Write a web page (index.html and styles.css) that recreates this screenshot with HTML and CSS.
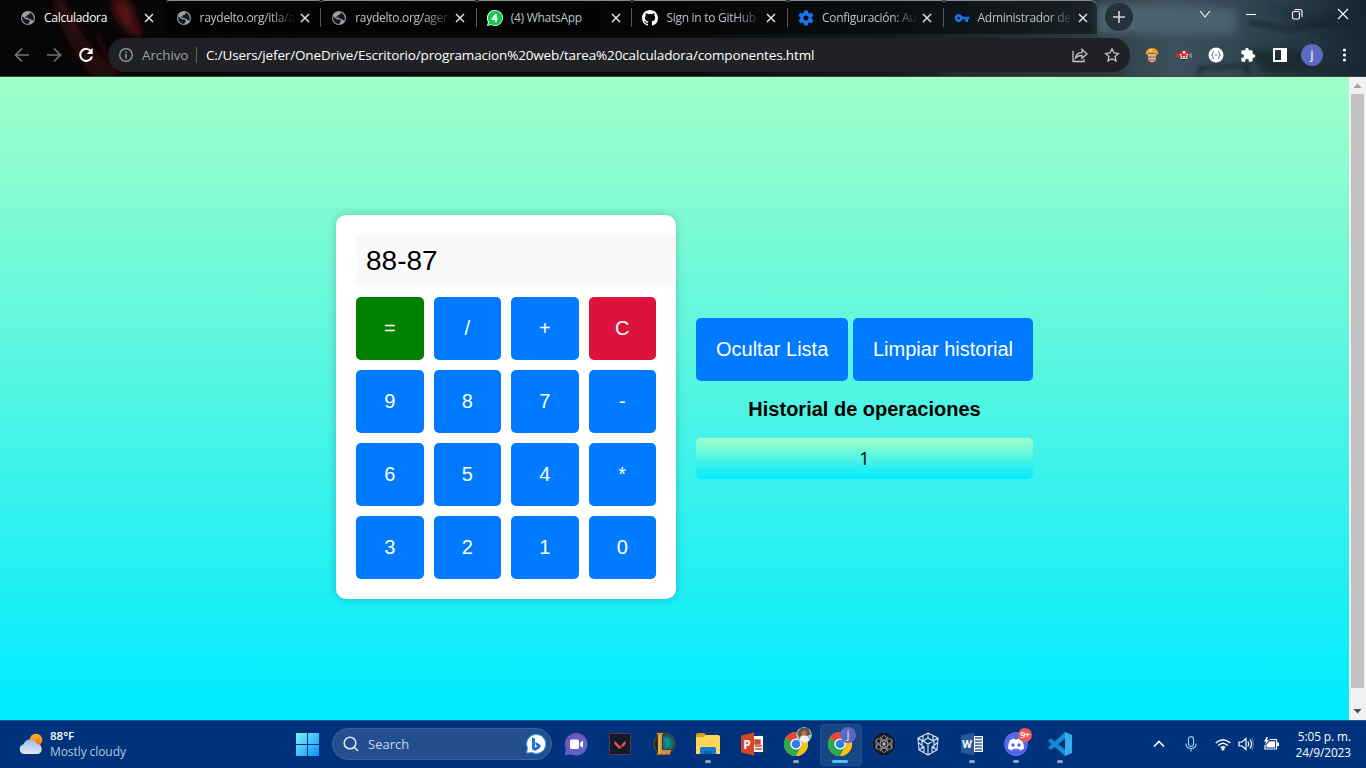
FILE: index.html
```html
<!DOCTYPE html>
<html lang="es">
<head>
<meta charset="utf-8">
<title>Calculadora</title>
<link rel="stylesheet" href="styles.css">
</head>
<body>
<svg class="defs" width="0" height="0">
  <defs>
    <symbol id="globe" viewBox="0 0 16 16"><circle cx="8" cy="8" r="7" fill="#9aa0a6"/><path d="M2.200 6.300L5.400 9l1.200.4h2.200l.9.900v1.500l-1.200 1.200v1.300C4.300 14.300 1.500 10.600 2.200 6.300zM9.600 2.400v1.300L8.300 5H6.900v1.500H5.300v1.300h2.800l1.100 1.100h1.700l.6 1.400h1.500l.5.700C14.500 7.500 13.200 3.600 9.600 2.400z" fill="#151618"/></symbol>
    <symbol id="close" viewBox="0 0 10 10"><path d="M1 1l8 8M9 1L1 9" stroke="currentColor" stroke-width="1.500" fill="none"/></symbol>
    <symbol id="chrome" viewBox="0 0 24 24"><circle cx="12" cy="12" r="12" fill="#fbc116"/><path d="M12 12L1.600 6A12 12 0 0 1 22.400 6z" fill="#ea4335"/><path d="M12 12L1.600 6A12 12 0 0 0 12 24l5.200-9z" fill="#2da94f"/><path d="M12 6.500h10.700A12 12 0 0 1 12 24l4.800-9z" fill="#fbc116"/><circle cx="12" cy="12" r="5.600" fill="#fff"/><circle cx="12" cy="12" r="4.300" fill="#2f7de9"/></symbol>
  </defs>
</svg>

<header class="browser">
  <svg class="theme" width="1366" height="77" viewBox="0 0 1366 77" preserveAspectRatio="none">
    <defs>
      <linearGradient id="sky" x1="0" x2="1"><stop offset="0" stop-color="#050505"/><stop offset=".5" stop-color="#090a0b"/><stop offset=".66" stop-color="#141c21"/><stop offset=".8" stop-color="#2c3b45"/><stop offset=".86" stop-color="#3c515d"/><stop offset=".93" stop-color="#2d414d"/><stop offset="1" stop-color="#182630"/></linearGradient>
      <filter id="soft" x="-50%" y="-50%" width="200%" height="200%"><feGaussianBlur stdDeviation="5"/></filter>
      <filter id="fine" x="-50%" y="-50%" width="200%" height="200%"><feGaussianBlur stdDeviation="2"/></filter>
    </defs>
    <rect width="1366" height="77" fill="url(#sky)"/>
    <path d="M52 0q10 40 40 77h30Q80 40 66 0z" fill="#25080a" filter="url(#soft)"/>
    <path d="M112 0q2 26 30 40l-8-24-6-16z" fill="#5c1216" filter="url(#soft)"/>
    <path d="M58 0q12 20 20 34M97 34q8 20 18 40M116 0q6 20 24 33" stroke="#4e1216" stroke-width="2" fill="none" filter="url(#fine)"/>
    <g filter="url(#soft)">
      <path d="M1096 34V4h70l70 6v24z" fill="#4c636e"/>
      <path d="M1245 50h60l50 25h-90z" fill="#1c2a32"/>
      <path d="M1265 5l50 16 50-12v22l-50-3z" fill="#182730"/>
      <path d="M960 60h160v17H940z" fill="#273037"/>
    </g>
    <path d="M1250 22l40 8 76-20M1200 77v-8l48-2v10" stroke="#16242c" stroke-width="3" fill="none" filter="url(#fine)"/>
  </svg>

  <div class="strip">
    <div class="tab active"><svg class="fav"><use href="#globe"/></svg><span class="name">Calculadora</span><svg class="x"><use href="#close"/></svg></div>
    <div class="tab nosep"><svg class="fav"><use href="#globe"/></svg><span class="name fade">raydelto.org/itla/a</span><svg class="x"><use href="#close"/></svg></div>
    <div class="tab"><svg class="fav"><use href="#globe"/></svg><span class="name fade">raydelto.org/ager</span><svg class="x"><use href="#close"/></svg></div>
    <div class="tab"><svg class="fav" viewBox="0 0 16 16"><path d="M8 0a8 8 0 1 1-3.600 15.100L0 16l1-4A8 8 0 0 1 8 0z" fill="#fff"/><path d="M8 .8a7.200 7.200 0 1 1-3.500 13.400l-3.300.8.8-3.200A7.200 7.200 0 0 1 8 .8z" fill="#14c94c"/><path d="M8.800 4L5.500 9.300h5M9 4v8" stroke="#fff" stroke-width="1.600" fill="none"/></svg><span class="name">(4) WhatsApp</span><svg class="x"><use href="#close"/></svg></div>
    <div class="tab"><svg class="fav" viewBox="0 0 16 16"><path fill="#fff" d="M8 0C3.580 0 0 3.580 0 8c0 3.540 2.290 6.530 5.470 7.590.4.070.55-.17.55-.38 0-.19-.01-.82-.01-1.490-2.010.37-2.530-.49-2.690-.94-.09-.23-.48-.94-.82-1.130-.28-.15-.68-.52-.01-.53.63-.01 1.080.58 1.230.82.72 1.210 1.870.87 2.330.66.07-.52.28-.87.51-1.070-1.780-.2-3.640-.89-3.640-3.950 0-.87.31-1.590.82-2.150-.08-.2-.36-1.020.08-2.120 0 0 .67-.21 2.200.82a7.600 7.600 0 0 1 4 0c1.530-1.040 2.200-.82 2.200-.82.44 1.100.16 1.920.08 2.120.51.56.82 1.270.82 2.150 0 3.070-1.870 3.750-3.650 3.950.29.25.54.73.54 1.480 0 1.070-.01 1.930-.01 2.200 0 .21.15.46.55.38A8 8 0 0 0 16 8c0-4.420-3.580-8-8-8z"/></svg><span class="name fade">Sign in to GitHub</span><svg class="x"><use href="#close"/></svg></div>
    <div class="tab"><svg class="fav" viewBox="1.500 1.500 21 21"><path fill="#1a73e8" d="M19.400 13c.1-.6.100-1.300 0-2l2.100-1.600c.2-.2.300-.5.100-.7l-2-3.400c-.1-.2-.4-.3-.6-.2l-2.500 1a7 7 0 0 0-1.700-1l-.4-2.600c0-.3-.2-.5-.5-.5h-4c-.3 0-.5.200-.5.500L9 5.100a7 7 0 0 0-1.700 1l-2.500-1c-.2-.1-.5 0-.6.200l-2 3.400c-.1.200-.1.500.1.700L4.500 11v2l-2.200 1.600c-.2.200-.2.500-.1.700l2 3.400c.1.200.4.300.6.200l2.500-1a7 7 0 0 0 1.700 1l.4 2.600c0 .3.200.5.500.5h4c.3 0 .5-.2.500-.5l.4-2.600a7 7 0 0 0 1.700-1l2.500 1c.2.1.5 0 .6-.2l2-3.400c.1-.2.100-.5-.1-.7zM12 15.300a3.300 3.300 0 1 1 0-6.600 3.300 3.300 0 0 1 0 6.600z"/></svg><span class="name fade">Configuración: Au</span><svg class="x"><use href="#close"/></svg></div>
    <div class="tab last"><svg class="fav" viewBox="0 0 24 24"><path fill="#1a73e8" d="M12.700 10a6 6 0 1 0 0 4H17v4h4v-4h2v-4zM7 14a2 2 0 1 1 0-4 2 2 0 0 1 0 4z"/></svg><span class="name fade">Administrador de</span><svg class="x"><use href="#close"/></svg></div>
    <div class="plus"><svg width="12" height="12"><path d="M6 0v12M0 6h12" stroke="#d5d8da" stroke-width="1.600"/></svg></div>
    <div class="window">
      <svg viewBox="0 0 12 12"><path d="M1 3l5 6 5-6"/></svg>
      <svg viewBox="0 0 12 12"><path d="M1 6.500h10"/></svg>
      <svg viewBox="0 0 12 12"><rect x="1.500" y="3.500" width="7" height="7.500" rx="1.500"/><path d="M3.500 1.500H9a2 2 0 0 1 2 2V9"/></svg>
      <svg viewBox="0 0 12 12"><path d="M1 1l10 10M11 1L1 11"/></svg>
    </div>
  </div>

  <div class="toolbar">
    <svg class="nav dim" viewBox="0 0 16 16"><path d="M15 8H2M8 1.500L1.500 8 8 14.500"/></svg>
    <svg class="nav dim" viewBox="0 0 16 16"><path d="M1 8h13M8 1.500L14.500 8 8 14.500"/></svg>
    <svg class="nav" viewBox="0 0 16 16"><path d="M13.200 4.500A6 6 0 1 0 14 9.500" stroke-width="2"/><path d="M14.700 1v6h-6z" fill="#fff" stroke="none"/></svg>
    <div class="omnibox">
      <svg class="info" viewBox="0 0 14 14"><circle cx="7" cy="7" r="6.300" fill="none" stroke="#9aa0a6" stroke-width="1.300"/><path d="M7 6v4.500M7 3.500v1.500" stroke="#9aa0a6" stroke-width="1.500"/></svg>
      <span class="scheme">Archivo</span><i class="bar"></i>
      <span class="url">C:/Users/jefer/OneDrive/Escritorio/programacion%20web/tarea%20calculadora/componentes.html</span>
      <svg class="share" viewBox="0 0 16 16"><path d="M1 4v10.500h11V12M3.500 11c.5-3.500 3-5.300 6.500-5.300V2.500L15 7l-5 4.300V8.500C7 8.500 5 9.200 3.500 11z"/></svg>
      <svg class="star" viewBox="0 0 16 16"><path d="M8 1.800l1.900 4.100 4.500.5-3.300 3.100.9 4.500-4-2.300L4 14l.9-4.500L1.600 6.400l4.500-.5z"/></svg>
    </div>
    <div class="ext">
      <svg viewBox="0 0 16 16"><path d="M3.500 7h9l-1 7L8 15.500 4.500 14z" fill="#e7b184"/><path d="M1.500 7.500Q2 1 8 1t6.500 6.500Q8 5 1.500 7.500z" fill="#f5a21f"/><path d="M5 2.500h3v2H5z" fill="#ffd87b"/><path d="M4.500 9h3v2h-3zm4 0h3v2h-3z" fill="#6f91a8"/><path d="M5 13h6" stroke="#d76c36" stroke-width="1.500"/></svg>
      <svg viewBox="0 0 16 16"><path d="M0 6l3 1v3L0 11z" fill="#d22a2b"/><path d="M16 6l-3 1v3l3 1z" fill="#78858a"/><path d="M3 9q0-5.500 5-5.500T13 9z" fill="#df2530"/><path d="M6.800 4.200h2.400v2.400H6.800zM4 7h1.500v1.500H4zm6.500 0H12v1.500h-1.500z" fill="#fff"/><path d="M4.500 9h7v3.500h-7z" fill="#ecc7ab"/><path d="M6 9.500h1v1.500H6zm3 0h1v1.500H9zM5 12h6v1H5z" fill="#3a2020"/></svg>
      <svg viewBox="0 0 16 16"><circle cx="8" cy="8" r="7.500" fill="#fff"/><path d="M6 4.500q-1.500 0-1.300 1.800T3.500 8q1.400 0 1.200 1.700T6 11.500M10 4.500q1.500 0 1.300 1.800T12.500 8q-1.400 0-1.200 1.700T10 11.500M6.500 8h3" stroke="#777" fill="none"/></svg>
      <svg viewBox="0 0 24 24"><path fill="#fff" d="M20.500 11H19V7a2 2 0 0 0-2-2h-4V3.500a2.500 2.500 0 0 0-5 0V5H4a2 2 0 0 0-2 2v3.800h1.500a2.700 2.700 0 0 1 0 5.400H2V20c0 1.100.9 2 2 2h3.800v-1.500a2.700 2.700 0 0 1 5.400 0V22H17a2 2 0 0 0 2-2v-4h1.500a2.500 2.500 0 0 0 0-5z"/></svg>
      <svg viewBox="0 0 16 16"><path d="M1 1h14v14H1zm2 2v10h6V3z" fill="#fff" fill-rule="evenodd"/></svg>
      <span class="avatar">j</span>
      <svg viewBox="0 0 16 16"><circle cx="8.500" cy="3" r="1.600" fill="#fff"/><circle cx="8.500" cy="8" r="1.600" fill="#fff"/><circle cx="8.500" cy="13" r="1.600" fill="#fff"/></svg>
    </div>
  </div>
</header>

<div class="viewport">
  <main class="page">
    <section class="calc">
      <div class="display">88-87</div>
      <div class="keys">
        <button class="btn equal">=</button><button class="btn">/</button><button class="btn">+</button><button class="btn clear">C</button>
        <button class="btn">9</button><button class="btn">8</button><button class="btn">7</button><button class="btn">-</button>
        <button class="btn">6</button><button class="btn">5</button><button class="btn">4</button><button class="btn">*</button>
        <button class="btn">3</button><button class="btn">2</button><button class="btn">1</button><button class="btn">0</button>
      </div>
    </section>
    <section class="history">
      <div class="actions"><button class="btn">Ocultar Lista</button><button class="btn">Limpiar historial</button></div>
      <h2>Historial de operaciones</h2>
      <div class="entry">1</div>
    </section>
  </main>
  <div class="scroll">
    <svg width="17" height="17"><path d="M4.500 11h8l-4-4.500z" fill="#a3a3a3"/></svg>
    <div class="thumb"></div>
    <svg width="17" height="17"><path d="M4.500 6h8l-4 4.500z" fill="#505050"/></svg>
  </div>
</div>

<footer class="taskbar">
  <div class="weather">
    <svg width="26" height="22" viewBox="0 0 26 22"><defs><linearGradient id="cl" x2="0" y2="1"><stop stop-color="#9db9ea"/><stop offset="1" stop-color="#e4e9f8"/></linearGradient><linearGradient id="sun" x2="0" y2="1"><stop stop-color="#fdb62a"/><stop offset="1" stop-color="#ed6810"/></linearGradient></defs><circle cx="18" cy="7" r="6.300" fill="url(#sun)"/><path d="M6 21a5 5 0 0 1-.5-9.800A7.200 7.200 0 0 1 19 11a5.100 5.100 0 0 1 1 10z" fill="url(#cl)"/></svg>
    <div><b>88°F</b><span>Mostly cloudy</span></div>
  </div>
  <svg class="start" viewBox="0 0 23 23"><defs><linearGradient id="win" x2="1" y2="1"><stop stop-color="#83f0ff"/><stop offset="1" stop-color="#0592f8"/></linearGradient></defs><path d="M0 0h11v11H0zm12 0h11v11H12zM0 12h11v11H0zm12 0h11v11H12z" fill="url(#win)"/></svg>
  <div class="search">
    <svg width="16" height="16" viewBox="0 0 16 16"><circle cx="7" cy="7" r="5.800"/><path d="M11.200 11.200L15 15"/></svg>
    <span>Search</span>
    <svg class="bing" width="20" height="20" viewBox="0 0 20 20"><path d="M10 .5a9.500 9.500 0 1 1-4 18L.7 19l.8-5A9.500 9.500 0 0 1 10 .5z" fill="#fff" stroke="#2ba9ed"/><path d="M6 3.500l3 1v9l-3 2z" fill="#1877db"/><path d="M9 13.500l2.500-1.300-1.500-1L9 8l5 2.300q1.500 3-1 4.300L9 17l-3-2z" fill="#2d63dc"/></svg>
  </div>
  <div class="apps">
    <div><svg viewBox="0 0 24 24"><defs><linearGradient id="ch" x2="1" y2="1"><stop stop-color="#7754b8"/><stop offset="1" stop-color="#5967d0"/></linearGradient></defs><path d="M12 1a11.300 11.300 0 1 1-5 21.300L.5 23l1.300-6A11.300 11.300 0 0 1 12 1z" fill="url(#ch)"/><rect x="6" y="7.500" width="9" height="9.500" rx="1.500" fill="#fff"/><path d="M16 11l3-2.500v7.500l-3-2.500z" fill="#fff"/></svg></div>
    <div><svg viewBox="0 0 24 24"><path d="M1.500 1.500h21v21h-21z" fill="#111b25" stroke="#71304b"/><path d="M6.500 8.500v3.500l4 4.500h3.500zm11 0v3.500l-2 2.500h-3.500z" fill="#ff4655"/></svg></div>
    <div><svg viewBox="0 0 24 24"><circle cx="12.500" cy="12" r="10.500" fill="#152426" stroke="#715926"/><circle cx="13.500" cy="11.500" r="8.500" fill="#0c717b"/><path d="M12 6q6-1 7 6l-5 5" fill="#118e97"/><path d="M4 .5h8l-1.500 3v14h9.500l-2 5.500H4l1.500-3V4z" fill="#c79345" stroke="#493415"/><path d="M7.500 3v18" stroke="#e5bd64" stroke-width="1.500"/></svg></div>
    <div class="open"><svg viewBox="0 0 24 24"><path d="M0 3q0-2 2-2h6l3 3v4H0z" fill="#dc9c17"/><path d="M0 5h8l2-2h12q2 0 2 2v17H0z" fill="#ffd65a"/><path d="M4 22v-5q0-2 2-2h12q2 0 2 2v5z" fill="#147acb"/><path d="M8 19h8v3H8z" fill="#0860a8"/></svg></div>
    <div><svg viewBox="0 0 24 24"><path d="M13 4h10v16H13z" fill="#fff"/><path d="M15 8h5v4h-5zM15 14h7m-7 3h7" fill="#d24726" stroke="#d24726" stroke-width="1.500"/><path d="M1 3.500l13-3v23l-13-3z" fill="#d24726"/><text x="3.300" y="16.500" class="office">P</text></svg></div>
    <div class="open"><svg viewBox="0 0 24 24"><use href="#chrome"/></svg><svg class="photo" viewBox="0 0 16 16"><circle cx="8" cy="8" r="8" fill="#aebbb7"/><path d="M1 6l4-5 7 0 3 6-6 3-5 2z" fill="#5c5644"/><path d="M4 14q-1-6 4-6t5 6l-4 2z" fill="#ecf0eb"/><circle cx="8" cy="6" r="2.600" fill="#be7151"/></svg></div>
    <div class="open current"><svg viewBox="0 0 24 24"><use href="#chrome"/></svg><span class="photo profile">j</span></div>
    <div><svg viewBox="0 0 24 24"><circle cx="12" cy="12" r="11" fill="#171719"/><g fill="none" stroke="#92969a" stroke-width=".9"><ellipse cx="12" cy="12" rx="3.500" ry="8.500"/><ellipse cx="12" cy="12" rx="3.500" ry="8.500" transform="rotate(60 12 12)"/><ellipse cx="12" cy="12" rx="3.500" ry="8.500" transform="rotate(120 12 12)"/><path d="M4 7.500v9M20 7.500v9M8 4.500l8 15M16 4.500l-8 15"/></g><circle cx="12" cy="12" r="1.800" fill="#aaa"/></svg></div>
    <div><svg viewBox="0 0 24 24"><g fill="none" stroke="#dbe6f5" stroke-width="1.100"><path d="M12 1l10 5-1 12-9 5-9-5L2 6zM2 6l10 6 10-6M12 12v11M7 3.500v5.500l5-3 5 3V3.500M3 11l5 4v6M21 11l-5 4v6M6 8v8m12-8v8M12 1v5M3 18l5-3m13 3l-5-3"/></g></svg></div>
    <div class="open"><svg viewBox="0 0 24 24"><path d="M13 4h10v16H13z" fill="#fff"/><path d="M15 6h7m-7 3h7m-7 3h7m-7 3h7m-7 3h7" stroke="#2b579a" stroke-width="1.300"/><path d="M1 3.500l13-3v23l-13-3z" fill="#2b579a"/><text x="2.200" y="16" class="office word">W</text></svg></div>
    <div class="open"><svg viewBox="0 0 24 24"><circle cx="12" cy="12" r="12" fill="#5865f2"/><path d="M6 7.500q3-1.500 4-1.500l.6 1h2.800l.6-1q1 0 4 1.500 2 4 2 8.500-2 1.700-4 2l-1-1.800H9L8 18q-2-.3-4-2 0-4.500 2-8.500zm3 3.200a1.600 1.800 0 1 0 .01 0zm6 0a1.600 1.800 0 1 0 .01 0z" fill="#fff" fill-rule="evenodd" transform="translate(0 .5)"/></svg><span class="badge">9+</span></div>
    <div class="open"><svg viewBox="0 0 24 24"><path d="M17 0l7 3v18l-7 3L0 9l2.500-2.500L18 18V6L2.500 18 0 15.500z" fill="#158bd3"/><path d="M17 0l7 3v18l-7 3z" fill="#36adee"/></svg></div>
  </div>
  <div class="tray">
    <svg viewBox="0 0 16 16"><path d="M3 10.500l5-5 5 5" stroke-width="1.700"/></svg>
    <svg viewBox="0 0 16 16"><rect x="5.500" y=".7" width="5" height="9.600" rx="2.500" stroke="#82cbf0"/><path d="M3 7.500q0 5 5 5t5-5M8 12.500v3" stroke="#82cbf0"/></svg>
    <svg viewBox="0 0 16 16"><path d="M.7 7Q8 .3 15.300 7M3.200 9.500q4.800-4.700 9.600 0M5.700 11.800q2.300-2.200 4.600 0" stroke-width="1.400"/><circle cx="8" cy="13" r="1" fill="#fff"/></svg>
    <svg viewBox="0 0 16 16"><path d="M1 6h3l4-3.500v11L4 10H1zM10 5.500q1.500 2.500 0 5M12 3.500q3 4.500 0 9"/><path d="M14 2q3 6 0 12" stroke="#4b70a5"/></svg>
    <svg viewBox="0 0 16 16"><path d="M6.500 3.500H13.500v9.500H2V9"/><path d="M6.500 5.200H12v6.200H3.500V8.500z" fill="#fff" stroke="none"/><path d="M15 6.500v3.500" stroke-width="2"/><path d="M3.500 1L1 5.500h2L2 9l4-5H4l1-3z" fill="#fff" stroke="none"/></svg>
    <div class="clock"><span>5:05 p. m.</span><span>24/9/2023</span></div>
  </div>
</footer>
</body>
</html>
```
FILE: styles.css
```css
* { box-sizing: border-box; }
body { margin: 0; width: 1366px; height: 768px; overflow: hidden; display: flex; flex-direction: column; font-family: "Open Sans", "Noto Sans", sans-serif; }
svg { display: block; flex: none; }
.defs { position: absolute; }

.browser { position: relative; height: 77px; flex: none; border-bottom: 1px solid #46413f; }
.theme { position: absolute; left: 0; top: 0; height: 76px; }
.strip { position: relative; height: 34px; display: flex; padding-left: 10px; }
.tab { position: relative; flex: none; width: 155.6px; height: 34px; padding-left: 10px; display: flex; align-items: center; background: rgba(0, 0, 0, .45); border-top: 1px solid #858b8a; color: #bdc1c6; border-radius: 3px 3px 0 0; }
.tab.active { background: none; border-top-color: transparent; color: #fff; }
.tab.last { width: 153.400px; border-radius: 3px 7px 0 0; margin-right: 8px; }
.tab + .tab:not(.nosep)::before { content: ""; position: absolute; left: -1px; top: 7px; width: 1px; height: 19px; background: #53585c; }
.fav { width: 16px; height: 16px; }
.name { flex: none; width: 94px; margin-left: 8px; font-size: 12px; letter-spacing: -.280px; line-height: 20px; white-space: nowrap; }
.fade { -webkit-mask-image: linear-gradient(90deg, #000 70px, transparent 96px); mask-image: linear-gradient(90deg, #000 70px, transparent 96px); }
.x { width: 10px; height: 10px; margin-left: 6px; color: #e1e3e5; }
.plus { width: 28px; height: 28px; margin-top: 3px; border-radius: 50%; background: #253239; display: flex; align-items: center; justify-content: center; }
.window { margin-left: auto; display: flex; width: 167px; padding: 8px 17px 0 0; justify-content: space-between; }
.window svg { width: 12px; height: 12px; fill: none; stroke: #fff; stroke-width: 1.1; }

.toolbar { position: relative; height: 42px; display: flex; align-items: center; padding-left: 14px; gap: 16px; }
.nav { width: 16px; height: 16px; fill: none; stroke: #fff; stroke-width: 1.700; }
.dim { stroke: #737577; }
.omnibox { width: 1022px; height: 34px; margin-left: -2px; padding: 0 10px 0 11px; border-radius: 17px; background: #202124; display: flex; align-items: center; font-size: 13.500px; }
.info { width: 14px; height: 14px; }
.scheme { width: 47px; margin-left: 9px; color: #9aa0a6; white-space: nowrap; letter-spacing: -.1px; }
.bar { width: 1px; height: 16px; margin: 0 9px 0 7px; background: #5f6368; }
.url { color: #fff; white-space: nowrap; letter-spacing: -.155px; }
.share, .star { width: 16px; height: 16px; fill: none; stroke: #c3c6c9; stroke-width: 1.300; }
.share { margin-left: auto; }
.star { margin-left: 16px; }
.ext { display: flex; align-items: center; gap: 16px; margin-left: -2px; }
.ext svg { width: 16px; height: 16px; }
.avatar { width: 22px; height: 22px; margin: 0 -3px; border-radius: 50%; background: #5c6bc0; color: #fff; font-size: 13px; line-height: 20px; text-align: center; }

.viewport { height: 643px; flex: none; display: flex; }
.page { width: 1349px; display: flex; justify-content: center; align-items: center; gap: 20px; padding-left: 20px; background: linear-gradient(#a1ffc8, #00ebff 98%); font-family: "Liberation Sans", Arial, sans-serif; }
.calc { width: 340px; height: 384px; margin-top: 17px; padding: 20px; border-radius: 10px; background: #fff; box-shadow: 0 0 10px rgba(0, 0, 0, .2); }
.display { width: 320px; height: 52px; padding: 10px; margin-bottom: 10px; border-radius: 5px; background: #f9f9f9; font-size: 28px; line-height: 31px; }
.keys { display: grid; grid-template-columns: repeat(4, 1fr); gap: 10px; }
.btn { height: 63px; border: 0; border-radius: 5px; padding: 20px; background: #007bff; color: #fff; font: 20px/23px "Liberation Sans", Arial, sans-serif; white-space: nowrap; }
.equal { background: green; }
.clear { background: crimson; }
.history { width: 337px; height: 161px; margin-bottom: 1px; text-align: center; }
.actions { display: flex; gap: 5px; }
.actions .btn:first-child { width: 152px; }
.actions .btn:last-child { width: 180px; }
.history h2 { margin: 17px 0; font-size: 20px; line-height: 23px; }
.entry { height: 41px; padding: 10px; border-radius: 5px; background: linear-gradient(#a1ffc8, #00eaff); font: 18px/21px "Open Sans", sans-serif; }
.scroll { width: 17px; background: #f1f1f1; display: flex; flex-direction: column; }
.thumb { width: 13px; height: 594px; margin: 0 2px 15px; background: #c1c1c1; }

.taskbar { height: 48px; flex: none; display: flex; align-items: center; padding-bottom: 1px; background: #00337c; border-top: 1px solid #2c5588; color: #fff; }
.weather { width: 296px; padding-left: 18px; display: flex; align-items: center; gap: 6px; font-size: 12px; line-height: 16px; }
.weather b, .weather span { display: block; font-weight: 600; font-size: 11.500px; }
.weather span { font-weight: 400; font-size: 12px; letter-spacing: -.08px; color: #b6c6dc; }
.start { width: 23px; height: 23px; }
.search { width: 220px; height: 32px; margin-left: 13px; padding: 0 5px 0 10px; border-radius: 16px; background: #244f8e; border: 1px solid #3b639b; display: flex; align-items: center; font-size: 13px; color: #c9d6e6; }
.search > svg:first-child { fill: none; stroke: #dce5ef; stroke-width: 1.600; }
.search span { margin-left: 9px; }
.bing { margin-left: auto; }
.apps { display: flex; margin-left: 2px; }
.apps > div { position: relative; width: 44px; height: 40px; display: flex; align-items: center; justify-content: center; }
.apps > div > svg:first-child { width: 24px; height: 24px; }
.open::after { content: ""; position: absolute; left: 19px; bottom: 1px; width: 6px; height: 3px; border-radius: 2px; background: #91a6c4; }
.current::before { content: ""; position: absolute; left: 2px; top: 0; width: 40px; height: 40px; border-radius: 4px; background: #174585; border: 1px solid #21508d; }
.current svg { position: relative; }
.current::after { left: 14px; width: 16px; background: #4cc2ff; }
.photo { position: absolute; left: 22px; top: 3px; width: 16px; height: 16px; border-radius: 50%; }
.profile { background: #5c6bc0; font-size: 10px; line-height: 15px; text-align: center; }
.badge { position: absolute; left: 24px; top: 4px; width: 14px; height: 14px; border-radius: 50%; background: #eb5757; font-size: 9px; line-height: 13px; text-align: center; letter-spacing: -.5px; font-weight: 600; }
.office { font: bold 12px "Open Sans", sans-serif; fill: #fff; }
.word { font-size: 10px; }
.tray { margin-left: auto; padding-right: 15px; display: flex; align-items: center; }
.tray svg { width: 16px; height: 16px; margin-right: 16px; fill: none; stroke: #fff; stroke-width: 1.200; }
.tray svg:nth-child(3) { margin-right: 7px; }
.tray svg:nth-child(4) { margin-right: 9px; }
.tray svg:nth-child(5) { margin-right: 0; }
.clock { width: 72px; font-size: 11.800px; line-height: 16px; text-align: right; letter-spacing: -.05px; white-space: nowrap; }
.clock span { display: block; }
```
